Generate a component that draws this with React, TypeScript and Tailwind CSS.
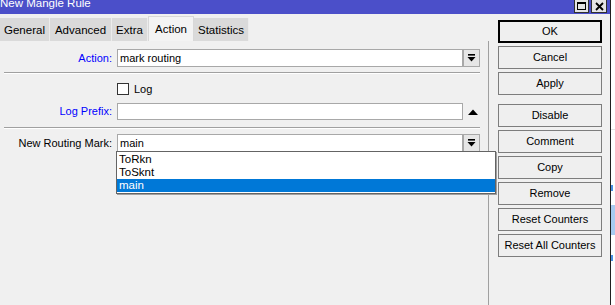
import React from "react";

const font = "font-['Liberation_Sans',Arial,sans-serif]";

function DropIcon() {
  return (
    <svg width="9" height="8" viewBox="0 0 9 8">
      <rect x="1" y="0" width="7" height="1.6" fill="#000" />
      <path d="M0.5 3 H8.5 L4.5 7.5 Z" fill="#000" />
    </svg>
  );
}

function DropButton() {
  return (
    <div className="w-[17px] h-[18px] border border-[#a8a8a8] bg-[#e6e6e6] flex items-center justify-center">
      <DropIcon />
    </div>
  );
}

function Separator() {
  return (
    <div className="ml-[4px] w-[476px]">
      <div className="h-px bg-[#a0a0a0]" />
      <div className="h-px bg-white" />
    </div>
  );
}

function Label({ text, blue }: { text: string; blue?: boolean }) {
  return (
    <div className={`w-[113px] pr-px text-right ${blue ? "text-[#0000ff]" : "text-black"}`}>{text}</div>
  );
}

const buttons: { label: string; gap?: boolean; def?: boolean }[] = [
  { label: "OK", def: true },
  { label: "Cancel" },
  { label: "Apply" },
  { label: "Disable", gap: true },
  { label: "Comment" },
  { label: "Copy" },
  { label: "Remove" },
  { label: "Reset Counters" },
  { label: "Reset All Counters" },
];

const tabs = [
  { label: "General", w: "w-[50px]" },
  { label: "Advanced", w: "w-[62px]" },
  { label: "Extra", w: "w-[36px]" },
  { label: "Action", w: "w-[46px]", active: true },
  { label: "Statistics", w: "w-[55px]" },
];

export default function App() {
  return (
    <div className={`${font} flex w-[615px] h-[305px] overflow-hidden bg-[#f0f0f0] text-[11px] text-black`}>
      {/* window */}
      <div className="w-[610px] flex flex-col">
        {/* title bar */}
        <div className="h-[14px] bg-[#4b4fc9] flex items-start overflow-hidden">
          <div className="text-white text-[11.5px] leading-[12px] -mt-[3px] flex-1">New Mangle Rule</div>
          <div className="flex gap-[2px] mr-[3px]">
            <div className="w-[15px] h-[13px] bg-[#e4e4e4] border border-[#303030] border-t-0 flex items-center justify-center">
              <div className="w-[9px] h-[8px] border border-black border-t-2" />
            </div>
            <div className="w-[16px] h-[13px] bg-[#e4e4e4] border border-[#303030] border-t-0 flex items-center justify-center">
              <svg width="9" height="9" viewBox="0 0 9 9">
                <path d="M1 1 L8 8 M8 1 L1 8" stroke="#000" strokeWidth="1.8" />
              </svg>
            </div>
          </div>
        </div>

        <div className="flex flex-1">
          {/* left side */}
          <div className="w-[488px] flex flex-col">
            {/* tabs */}
            <div className="flex items-end h-[27px] pt-[2px]">
              {tabs.map((t) =>
                t.active ? (
                  <div
                    key={t.label}
                    className={`${t.w} h-[25px] bg-[#f3f3f3] border border-b-0 border-[#d8d8d8] flex items-center justify-center pt-px text-[11.5px]`}
                  >
                    {t.label}
                  </div>
                ) : (
                  <div
                    key={t.label}
                    className={`${t.w} h-[23px] bg-[#dadada] border-r border-[#ececec] flex items-center justify-center pt-[3px] text-[11.5px]`}
                  >
                    {t.label}
                  </div>
                )
              )}
            </div>

            {/* form */}
            <div className="flex flex-col">
              <div className="flex items-center mt-[8px] h-[18px]">
                <Label text="Action:" blue />
                <div className="ml-[4px] w-[346px] h-[18px] bg-white border border-[#a8a8a8] flex items-center pl-[2px]">
                  mark routing
                </div>
                <DropButton />
              </div>

              <div className="mt-[5px]">
                <Separator />
              </div>

              <div className="flex items-center mt-[9px] h-[12px]">
                <div className="ml-[117px] w-[12px] h-[12px] bg-white border border-[#333333]" />
                <span className="ml-[5px]">Log</span>
              </div>

              <div className="flex items-center mt-[8px] h-[17px]">
                <Label text="Log Prefix:" blue />
                <div className="ml-[4px] w-[346px] h-[17px] bg-white border border-[#a8a8a8]" />
                <svg className="ml-[5px]" width="10" height="6" viewBox="0 0 10 6">
                  <path d="M0 6 H10 L5 0.5 Z" fill="#000" />
                </svg>
              </div>

              <div className="mt-[7px]">
                <Separator />
              </div>

              <div className="relative flex items-center mt-[5px] h-[18px]">
                <Label text="New Routing Mark:" />
                <div className="ml-[4px] w-[346px] h-[18px] bg-white border border-[#a8a8a8] flex items-center pl-[2px]">
                  main
                </div>
                <DropButton />

                {/* open dropdown list */}
                <div className="absolute z-10 left-[116px] top-[17px] w-[380px] bg-white border border-[#646464] shadow-[1px_1px_0_#a0a0a0] flex flex-col py-px">
                  <div className="h-[13px] leading-[13px] pl-[2px] text-[11.5px]">ToRkn</div>
                  <div className="h-[13px] leading-[13px] pl-[2px] text-[11.5px]">ToSknt</div>
                  <div className="h-[13px] leading-[13px] pl-[2px] text-[11.5px] bg-[#0078d7] text-white">main</div>
                </div>
              </div>
            </div>
          </div>

          {/* divider */}
          <div className="w-px mt-[27px] bg-[#a0a0a0]" />

          {/* buttons */}
          <div className="flex flex-col pl-[9px] pt-[6px] gap-[3px]">
            {buttons.map((b) => (
              <div
                key={b.label}
                className={`w-[104px] h-[23px] flex items-center justify-center bg-[#efefef] ${
                  b.def ? "border-2 border-black" : "border border-[#7d7d7d]"
                } ${b.gap ? "mt-[6px]" : ""}`}
              >
                {b.label}
              </div>
            ))}
          </div>
        </div>
      </div>

      {/* window edge and background window */}
      <div className="w-px bg-[#202020]" />
      <div className="flex-1 bg-white flex flex-col">
        <div className="h-[129px]" />
        <div className="h-px bg-[#e4e4e4]" />
        <div className="h-[55px]" />
        <div className="h-[6px] w-[2px] bg-[#4a90e2]" />
        <div className="h-[14px]" />
        <div className="h-[30px] bg-[#a8cbf0]" />
        <div className="h-[20px]" />
        <div className="h-[6px] w-[2px] bg-[#4a90e2]" />
      </div>
    </div>
  );
}
